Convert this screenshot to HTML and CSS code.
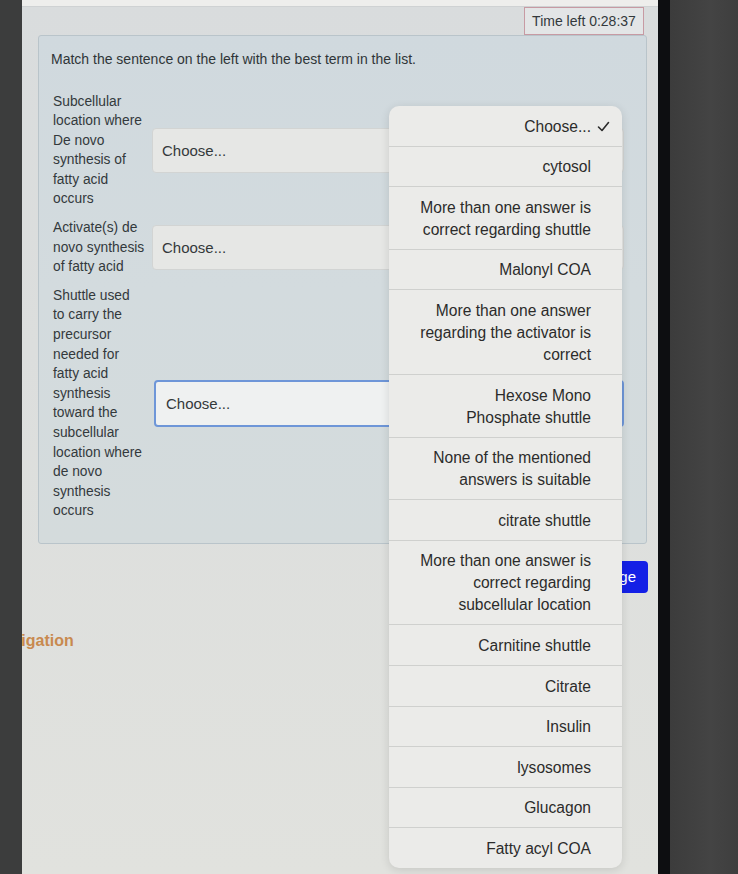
FILE: index.html
```html
<!DOCTYPE html>
<html lang="en">
<head>
<meta charset="utf-8">
<title>Quiz</title>
<link rel="stylesheet" href="styles.css">
</head>
<body>
<div class="frame">
  <div class="edge-left"></div>
  <div class="screen">
    <div class="topbar"></div>
    <div class="timer-row">
      <div class="timer">Time left 0:28:37</div>
    </div>
    <div class="panel">
      <p class="prompt">Match the sentence on the left with the best term in the list.</p>
      <div class="match-row">
        <div class="label">Subcellular<br>location where<br>De novo<br>synthesis of<br>fatty acid<br>occurs</div>
        <div class="select">Choose...</div>
      </div>
      <div class="match-row">
        <div class="label">Activate(s) de<br>novo synthesis<br>of fatty acid</div>
        <div class="select">Choose...</div>
      </div>
      <div class="match-row">
        <div class="label">Shuttle used<br>to carry the<br>precursor<br>needed for<br>fatty acid<br>synthesis<br>toward the<br>subcellular<br>location where<br>de novo<br>synthesis<br>occurs</div>
        <div class="select focused">Choose...</div>
      </div>
    </div>
    <div class="button-row">
      <button class="next">Next page</button>
    </div>
    <h2 class="nav-title">Navigation</h2>
  </div>
  <div class="bezel"></div>
  <div class="desk"></div>
</div>

<ul class="menu">
  <li class="item checked"><span>Choose...</span><svg class="check" width="13" height="11" viewBox="0 0 13 11"><path d="M1.5 6 L5 9.5 L11.5 1.5" fill="none" stroke="#2b2b2b" stroke-width="1.6" stroke-linecap="round" stroke-linejoin="round"/></svg></li>
  <li class="item">cytosol</li>
  <li class="item">More than one answer is<br>correct regarding shuttle</li>
  <li class="item">Malonyl COA</li>
  <li class="item">More than one answer<br>regarding the activator is<br>correct</li>
  <li class="item">Hexose Mono<br>Phosphate shuttle</li>
  <li class="item">None of the mentioned<br>answers is suitable</li>
  <li class="item">citrate shuttle</li>
  <li class="item">More than one answer is<br>correct regarding<br>subcellular location</li>
  <li class="item">Carnitine shuttle</li>
  <li class="item">Citrate</li>
  <li class="item">Insulin</li>
  <li class="item">lysosomes</li>
  <li class="item">Glucagon</li>
  <li class="item">Fatty acyl COA</li>
</ul>
</body>
</html>
```
FILE: styles.css
```css
* { box-sizing: border-box; }
html, body { margin: 0; padding: 0; }
body {
  width: 738px;
  height: 874px;
  overflow: hidden;
  background: #3f3f3f;
  font-family: "Liberation Sans", Arial, sans-serif;
  color: #2e3336;
  position: relative;
}
.frame {
  display: flex;
  height: 874px;
}
.edge-left {
  width: 22px;
  flex: none;
  background: #3c3d3d;
}
.screen {
  width: 636px;
  flex: none;
  overflow: hidden;
  background: linear-gradient(180deg, #d9dcdd 0%, #dcdedd 40%, #e1e2de 100%);
  display: flex;
  flex-direction: column;
}
.bezel {
  width: 12px;
  flex: none;
  background: #0d0e11;
}
.desk {
  flex: 1;
  background: linear-gradient(90deg, #3c3c3c, #444 60%, #3e3e3e);
}
.topbar {
  height: 7px;
  background: #eeeeec;
  border-bottom: 1px solid #cfd2d3;
}
.timer-row {
  display: flex;
  justify-content: flex-end;
  padding-right: 14px;
}
.timer {
  width: 120px;
  height: 28px;
  border: 1px solid #c79aa3;
  background: #e3e5e6;
  font-size: 14px;
  line-height: 26px;
  text-align: center;
  color: #33393c;
}
.panel {
  margin: 0 11px 0 16px;
  background: linear-gradient(180deg, #d0d9de 0%, #d3dbde 50%, #d4dbdc 100%);
  border: 1px solid #b9c4ca;
  border-radius: 3px;
  padding: 14px 22px 22px 14px;
}
.prompt {
  margin: 0 0 22px -2px;
  font-size: 14px;
  line-height: 19.5px;
  color: #2f3538;
}
.match-row {
  display: flex;
  align-items: center;
  margin-bottom: 9px;
}
.match-row:last-child { margin-bottom: 0; }
.label {
  width: 99px;
  flex: none;
  font-size: 13.8px;
  line-height: 19.6px;
  color: #33393c;
}
.select {
  flex: 1;
  height: 45px;
  border: 1px solid #d2d4d3;
  border-radius: 4px;
  background: #e6e7e5;
  padding-left: 9px;
  font-size: 15px;
  line-height: 43px;
  color: #34393b;
}
.select.focused {
  margin-left: 2px;
  height: 47px;
  border: 2px solid #6e96d8;
  background: #eff1f1;
  line-height: 43px;
  padding-left: 10px;
}
.button-row {
  display: flex;
  justify-content: flex-end;
  padding-right: 10px;
  margin-top: 17px;
}
.next {
  height: 32px;
  padding: 0 12px;
  border: none;
  border-radius: 4px;
  background: #1420e6;
  color: #ffffff;
  font-family: "Liberation Sans", Arial, sans-serif;
  font-size: 15px;
}
.nav-title {
  margin: 38px 0 0 -30px;
  font-size: 16px;
  line-height: 20px;
  font-weight: bold;
  color: #c8894f;
}
.menu {
  position: absolute;
  left: 389px;
  top: 106px;
  width: 233px;
  margin: 0;
  padding: 0;
  list-style: none;
  background: #ebebe9;
  border-radius: 10px;
  box-shadow: 0 2px 10px rgba(0, 0, 0, 0.12);
  overflow: hidden;
  z-index: 5;
}
.item {
  padding: 9.6px 31px 8px 10px;
  border-top: 1px solid #cfd0ce;
  text-align: right;
  font-size: 15.6px;
  line-height: 22px;
  color: #2b2b2b;
}
.item:first-child { border-top: none; }
.item.checked {
  padding-right: 12px;
  display: flex;
  justify-content: flex-end;
  align-items: center;
  gap: 6px;
}
.check { display: block; }
```
